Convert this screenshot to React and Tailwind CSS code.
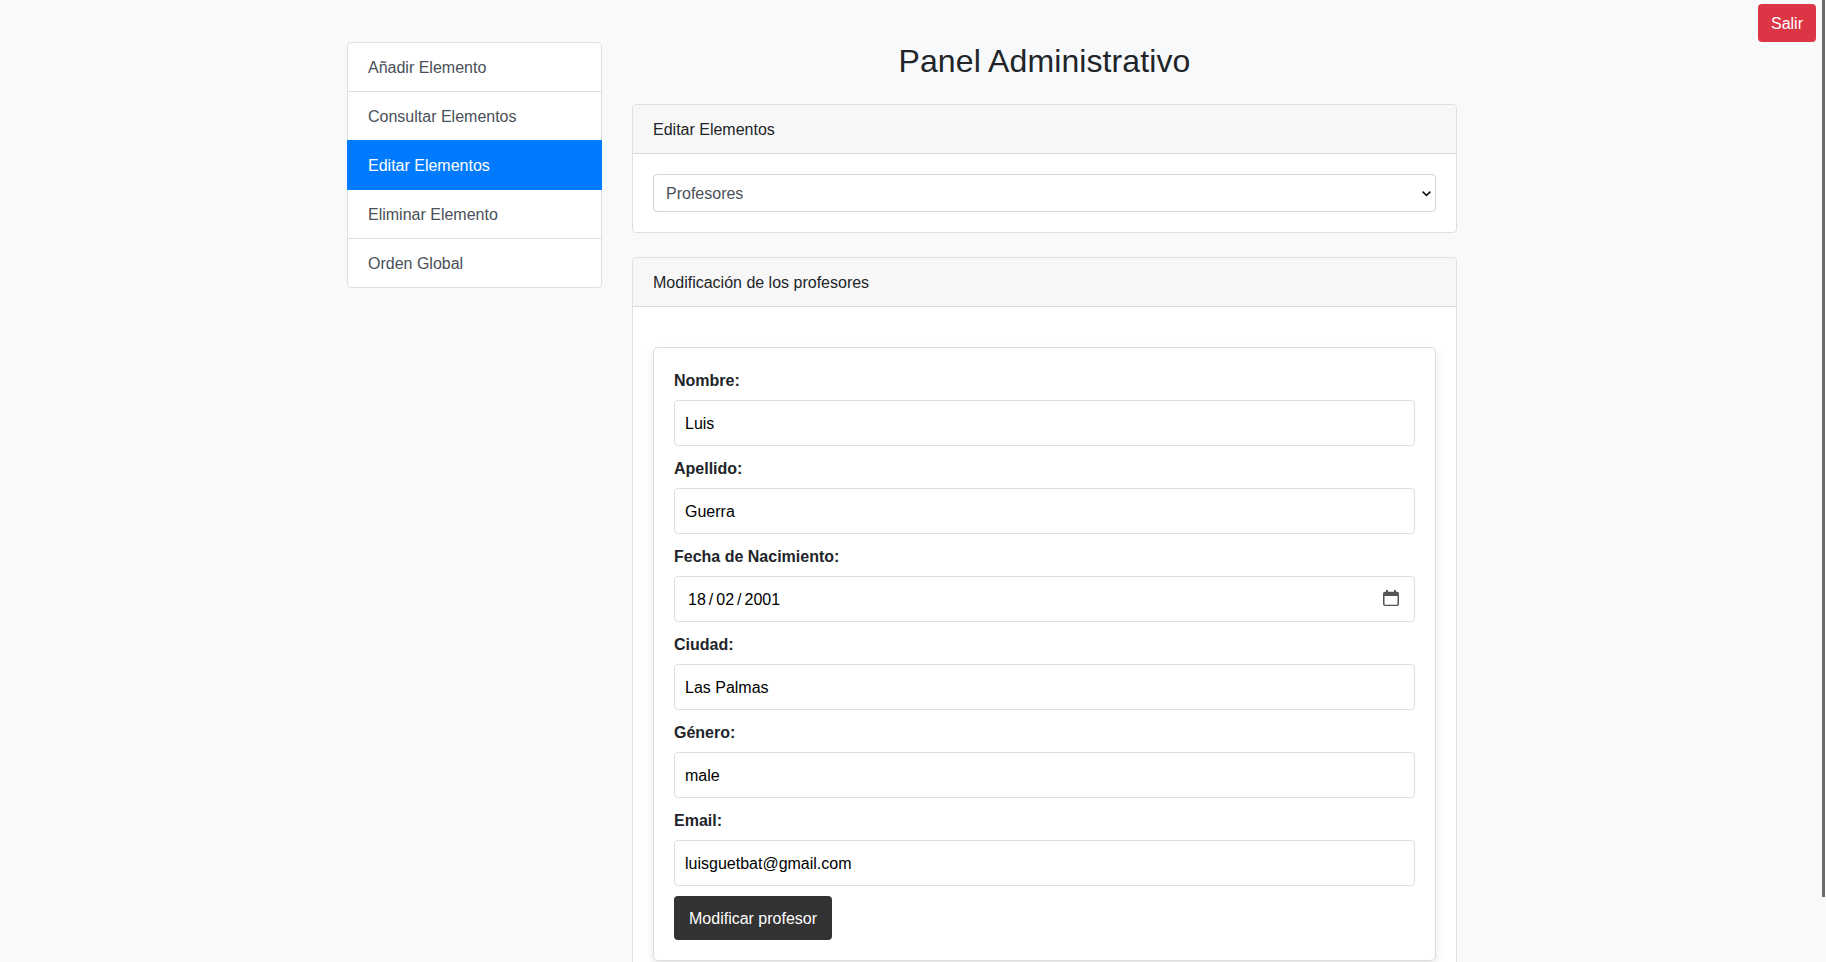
const menu = [
  'Añadir Elemento',
  'Consultar Elementos',
  'Editar Elementos',
  'Eliminar Elemento',
  'Orden Global',
];

const inputClass =
  'mb-[10px] block h-[46px] w-full rounded-[4px] border border-[#dddddd] bg-white px-[10px] pt-[11px] pb-[9px] text-base leading-6 text-black outline-none';

function CalendarIcon() {
  return (
    <svg width="16" height="16" viewBox="0 0 16 16" fill="#555555">
      <path
        fillRule="evenodd"
        d="M3 0h2v1.7h6V0h2v1.7h1A2 2 0 0 1 16 3.7V14a2 2 0 0 1-2 2H2a2 2 0 0 1-2-2V3.7a2 2 0 0 1 2-2h1zM1.5 6v8a.7.7 0 0 0 .7.7h11.6a.7.7 0 0 0 .7-.7V6z"
      />
    </svg>
  );
}

function Label({ children }) {
  return <label className="mb-[7px] block pt-px font-bold">{children}</label>;
}

function Field({ label, value }) {
  return (
    <>
      <Label>{label}</Label>
      <input type="text" defaultValue={value} className={inputClass} />
    </>
  );
}

function Card({ title, children }) {
  return (
    <section className="mb-6 rounded-[4px] border border-[#dfdfdf] bg-white">
      <header className="rounded-t-[3px] border-b border-[#dadada] bg-[#f7f7f7] px-5 pt-[13px] pb-[11px]">{title}</header>
      <div className="p-5">{children}</div>
    </section>
  );
}

export default function App() {
  return (
    <div className="relative h-[962px] overflow-hidden bg-[#f8f9fa] font-['Liberation_Sans',Arial,sans-serif] text-base leading-6 text-[#212529]">
      <div className="absolute top-0 left-[1822px] h-[897px] w-[3px] bg-[#6b6b6b]" />
      <button className="absolute top-1 right-[10px] h-[38px] w-[58px] rounded-[4px] bg-[#dc3545] pt-[2px] text-white">Salir</button>
      <div className="ml-[347px] flex w-[1110px] items-start gap-[30px] pt-[42px]">
        <nav className="w-[255px] shrink-0 overflow-hidden rounded-[4px]">
          {menu.map((item, i) => (
            <a
              key={item}
              href="#"
              className={
                'relative block border px-5 pt-[13px] pb-[11px] ' +
                (i > 0 ? '-mt-px ' : 'rounded-t-[4px] ') +
                (i === menu.length - 1 ? 'rounded-b-[4px] ' : '') +
                (i === 2
                  ? 'z-10 border-[#007bff] bg-[#007bff] text-white'
                  : 'border-[#dfdfdf] bg-white text-[#495057]')
              }
            >
              {item}
            </a>
          ))}
        </nav>
        <main className="w-[825px] shrink-0">
          <h2 className="mb-6 text-center text-[32px] leading-[38.4px] font-medium tracking-[0.1px]">Panel Administrativo</h2>
          <Card title="Editar Elementos">
            <div className="relative">
              <select className="block h-[38px] w-full appearance-none rounded-[4px] border border-[#ced4da] bg-white px-3 pt-[7px] pb-[5px] text-base leading-6 text-[#495057]">
                <option>Profesores</option>
              </select>
              <svg
                className="pointer-events-none absolute top-[17px] right-[5px]"
                width="9"
                height="6"
                viewBox="0 0 9 6"
                fill="none"
                stroke="#111111"
                strokeWidth="1.5"
              >
                <path d="M.6.6 4.5 4.4 8.4.6" />
              </svg>
            </div>
          </Card>
          <Card title="Modificación de los profesores">
            <form className="mt-5 rounded-[5px] border border-[#dddddd] bg-white p-5 shadow-[0_4px_8px_rgba(0,0,0,0.1)]">
              <Field label="Nombre:" value="Luis" />
              <Field label="Apellido:" value="Guerra" />
              <Label>Fecha de Nacimiento:</Label>
              <div className={inputClass + ' flex! items-center justify-between'}>
                <span className="flex gap-[3px] pl-[3px]">
                  <span>18</span>
                  <span>/</span>
                  <span>02</span>
                  <span>/</span>
                  <span>2001</span>
                </span>
                <span className="mr-[5px] mb-1">
                  <CalendarIcon />
                </span>
              </div>
              <Field label="Ciudad:" value="Las Palmas" />
              <Field label="Género:" value="male" />
              <Field label="Email:" value="luisguetbat@gmail.com" />
              <button type="button" className="block h-11 rounded-[4px] bg-[#333333] px-[15px] pt-[2px] text-white">
                Modificar profesor
              </button>
            </form>
          </Card>
        </main>
      </div>
    </div>
  );
}
